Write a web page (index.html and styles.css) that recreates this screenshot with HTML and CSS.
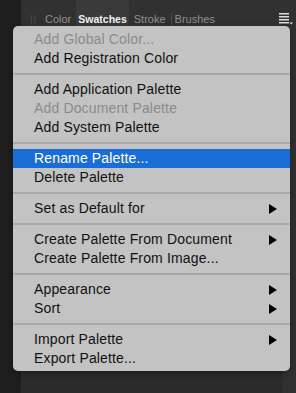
FILE: index.html
```html
<!DOCTYPE html>
<html lang="en">
<head>
  <meta charset="UTF-8" />
  <title>Swatches menu</title>
  <link rel="stylesheet" href="styles.css">
</head>
<body>
  <div class="app">
    <div class="side"></div>
    <div class="panel">
      <div class="tabs">
        <span class="grip">||</span>
        <span class="tab">Color</span>
        <span class="tab active">Swatches</span>
        <span class="tab">Stroke</span>
        <span class="tab-sep"></span>
        <span class="tab">Brushes</span>
        <span class="menu-icon">
          <svg width="14" height="12" viewBox="0 0 14 12">
            <rect x="0" y="0" width="10" height="1.5" fill="#ddd"/>
            <rect x="0" y="3" width="10" height="1.5" fill="#ddd"/>
            <rect x="0" y="6" width="10" height="1.5" fill="#ddd"/>
            <rect x="0" y="9" width="10" height="1.5" fill="#ddd"/>
            <path d="M10.5 9.5 L14 9.5 L12.25 11.5 Z" fill="#ddd"/>
          </svg>
        </span>
      </div>
      <div class="content">
        <div class="content-main"></div>
        <div class="content-edge"></div>
      </div>
    </div>
  </div>

  <div class="menu">
    <div class="item disabled">Add Global Color...</div>
    <div class="item">Add Registration Color</div>
    <div class="sep"></div>
    <div class="item">Add Application Palette</div>
    <div class="item disabled">Add Document Palette</div>
    <div class="item">Add System Palette</div>
    <div class="sep"></div>
    <div class="item selected">Rename Palette...</div>
    <div class="item">Delete Palette</div>
    <div class="sep"></div>
    <div class="item sub">Set as Default for</div>
    <div class="sep"></div>
    <div class="item sub">Create Palette From Document</div>
    <div class="item">Create Palette From Image...</div>
    <div class="sep"></div>
    <div class="item sub">Appearance</div>
    <div class="item sub">Sort</div>
    <div class="sep"></div>
    <div class="item sub">Import Palette</div>
    <div class="item">Export Palette...</div>
  </div>
</body>
</html>
```

FILE: styles.css
```css
body { margin: 0; width: 296px; height: 393px; overflow: hidden; background: #2b2b2b; font-family: "Liberation Sans", Arial, sans-serif; }
.app { display: flex; height: 393px; }
.side { width: 21px; background: #1e1e1e; }
.panel { flex: 1; display: flex; flex-direction: column; }
.tabs { height: 38px; background: #313131; display: flex; align-items: center; font-size: 11px; color: #8f8f8f; padding-left: 9px; }
.grip { color: #4d4d4d; font-size: 10px; margin-right: 10px; width: 5px; letter-spacing: 1px; }
.tab { height: 38px; line-height: 38px; margin-right: 5px; }
.tab.active { background: #3a3a3a; color: #f2f2f2; font-weight: bold; font-size: 10.5px; padding: 0 2px; }
.tab-sep { width: 1px; height: 13px; background: #4a4a4a; margin-right: 3px; margin-left: 0; }
.menu-icon { margin-left: auto; margin-right: 3px; display: flex; }
.content { flex: 1; display: flex; }
.content-main { flex: 1; background: #2b2b2b; }
.content-edge { width: 14px; background: #303030; border-left: 1px solid #262626; }
.menu { position: absolute; top: 26px; left: 13px; width: 277px; background: #c3c3c3; border-radius: 5px; padding: 4px 0 3px; box-shadow: 0 2px 6px rgba(0,0,0,0.35); }
.item { position: relative; height: 19px; line-height: 19px; padding-left: 21px; font-size: 14px; letter-spacing: 0.15px; color: #111; white-space: nowrap; }
.item.disabled { color: #8b8b8b; }
.item.selected { background: #1b6dd6; color: #fff; }
.item.sub::after { content: ""; position: absolute; right: 13px; top: 5px; border-left: 8px solid #000; border-top: 5px solid transparent; border-bottom: 5px solid transparent; }
.sep { height: 2px; background: #a9a9a9; margin: 5px 0; }
```
